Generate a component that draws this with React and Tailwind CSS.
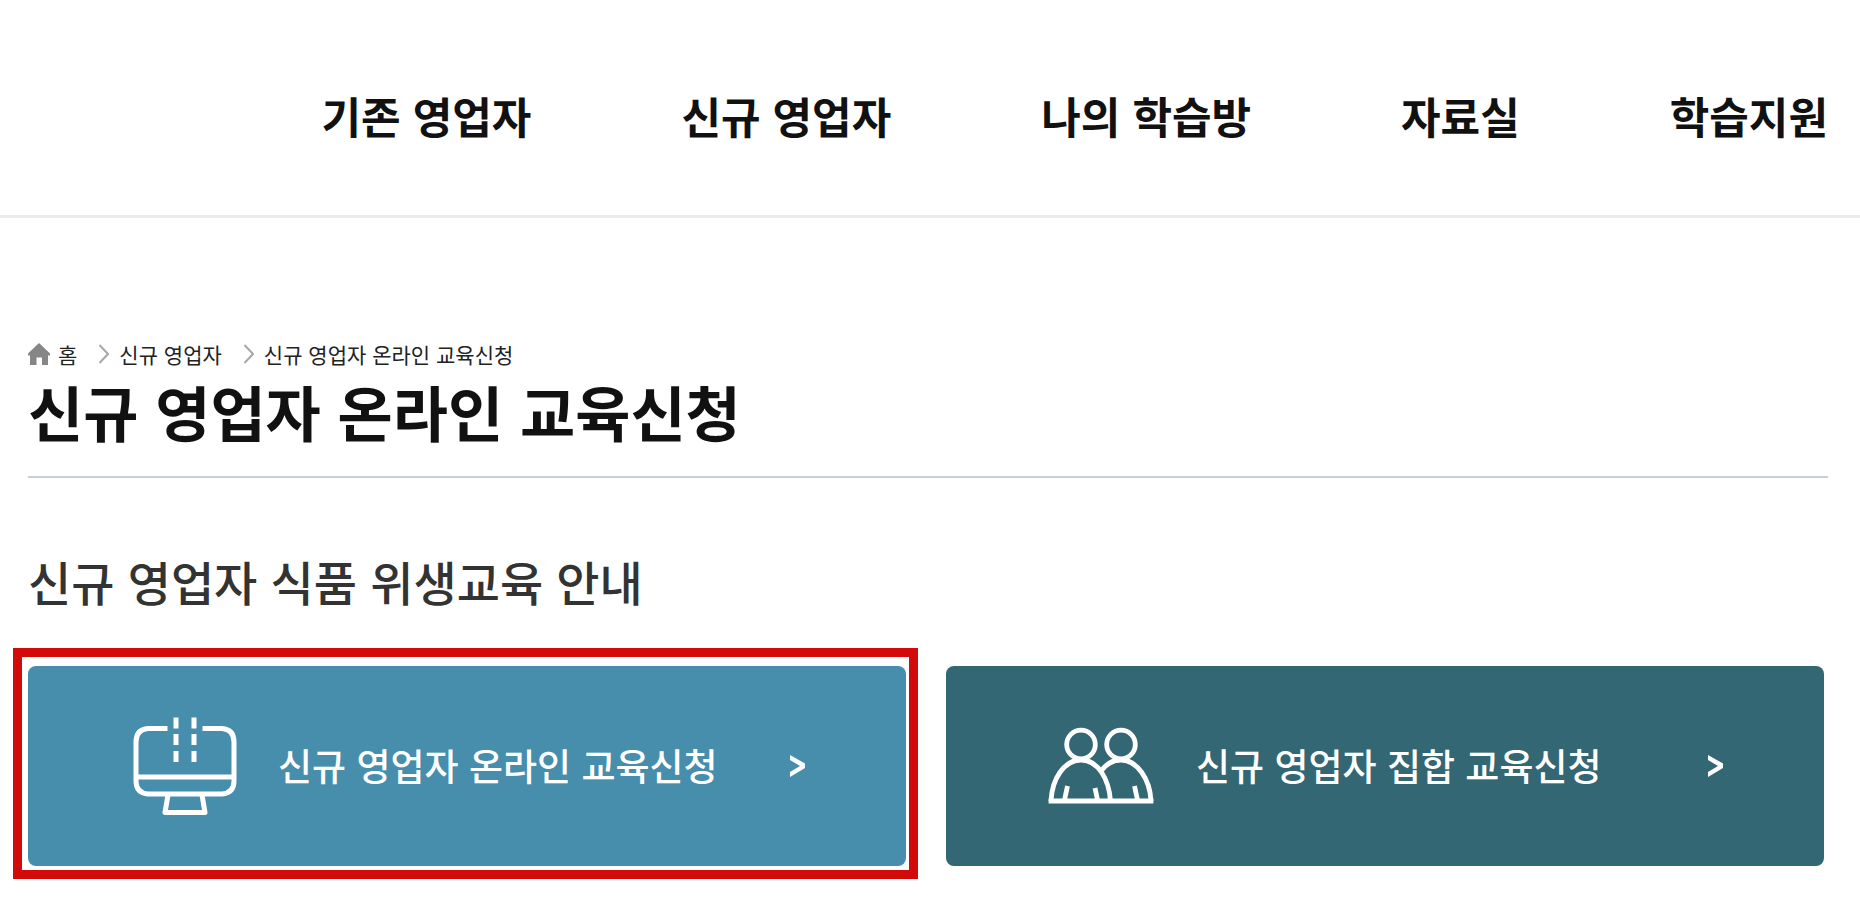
const menus = ["기존 영업자", "신규 영업자", "나의 학습방", "자료실", "학습지원"];

const crumbs = ["신규 영업자", "신규 영업자 온라인 교육신청"];

function HomeIcon() {
  return (
    <svg width="22" height="22" viewBox="0 0 22 22" fill="#868686" aria-hidden="true">
      <path d="M11 0 L22 10.5 V12.5 H20 V22 H14 V14.5 H8.5 V22 H2 V12.5 H0 V10.5 Z" />
    </svg>
  );
}

function CrumbArrow() {
  return (
    <svg width="10" height="20" viewBox="0 0 10 20" fill="none" stroke="#a8a8a8" strokeWidth="2" aria-hidden="true">
      <path d="M0.5 1 L9 10 L0.5 19" />
    </svg>
  );
}

function MonitorIcon() {
  return (
    <svg width="108" height="98" viewBox="-3 0 108 98" fill="none" stroke="#fff" strokeWidth="5" aria-hidden="true">
      <path d="M34.5 11.5 H15 Q3 12.5 3 25 V64 Q3 76 15 77 H89 Q101 76 101 64 V25 Q101 12.5 89 11.5 H69.5" />
      <path d="M3 60 H101" />
      <path d="M35 78 L32 95.5 H72 L69 78" strokeLinejoin="round" />
      <path d="M43 0.5 V11.5 M43 17 V28 M43 34 V45 M61 0.5 V11.5 M61 17 V28 M61 34 V45" />
    </svg>
  );
}

function PeopleIcon() {
  return (
    <svg width="108" height="78" viewBox="0 0 108 78" fill="none" stroke="#fff" strokeWidth="4.8" aria-hidden="true">
      <circle cx="33" cy="17.5" r="14.3" />
      <circle cx="73" cy="17.5" r="14.3" />
      <path d="M3 74 C4 52 16 33 33 33 C50 33 61 52 62.5 74" />
      <path d="M53.5 43.5 C59 36 66 33 73 33 C89 33 102 52 103 74" />
      <path d="M0.6 74 H105.4" />
      <path d="M19.5 59 L16.5 73 M47 61 L49.5 73 M86.5 59 L89.5 73" />
    </svg>
  );
}

function NextIcon() {
  return (
    <svg width="18" height="24" viewBox="0 0 18 24" fill="#fff" aria-hidden="true">
      <path d="M2 1 L17 9.5 V14 L2 23 V18 L12 12 L2 6 Z" />
    </svg>
  );
}

function CourseCard({ icon, label, color, highlighted }) {
  return (
    <a
      href="#"
      className={`relative flex h-50 flex-1 items-center rounded-lg pr-25 pl-[102px] text-white ${color}`}
    >
      {highlighted && (
        <span className="pointer-events-none absolute -top-[18px] -right-3 -bottom-[13px] -left-[15px] border-9 border-[#d20a0a]" />
      )}
      {icon}
      <span className="ml-10 flex-1 text-[37px] font-medium whitespace-nowrap">{label}</span>
      <NextIcon />
    </a>
  );
}

export default function App() {
  return (
    <div
      lang="ko"
      className="min-h-screen bg-white font-['Noto_Sans_CJK_KR',sans-serif] text-[#111]"
    >
      <header className="border-b-3 border-[#ebebeb] pt-20 pr-8 pb-16">
        <nav className="flex justify-end gap-[150px] text-[43px] leading-[71px] font-bold whitespace-nowrap">
          {menus.map((menu) => (
            <a key={menu} href="#">
              {menu}
            </a>
          ))}
        </nav>
      </header>

      <main className="pt-[120px] pr-8 pl-7">
        <nav className="flex items-center text-[21px] leading-8 text-[#222]">
          <a href="#" className="flex items-center gap-2">
            <HomeIcon />
            홈
          </a>
          {crumbs.map((crumb) => (
            <span key={crumb} className="ml-[22px] flex items-center gap-[10px]">
              <CrumbArrow />
              <a href="#">{crumb}</a>
            </span>
          ))}
        </nav>

        <h1 className="border-b-2 border-[#c6cfdb] pb-6 text-[60px] leading-[82px] font-bold">
          신규 영업자 온라인 교육신청
        </h1>

        <h2 className="pt-[68px] text-[47px] leading-[70px] text-[#333] font-medium">
          신규 영업자 식품 위생교육 안내
        </h2>

        <div className="mt-[50px] flex gap-10 pr-1">
          <CourseCard
            icon={<MonitorIcon />}
            label="신규 영업자 온라인 교육신청"
            color="bg-[#468eac]"
            highlighted
          />
          <CourseCard
            icon={<PeopleIcon />}
            label="신규 영업자 집합 교육신청"
            color="bg-[#336774]"
          />
        </div>
      </main>
    </div>
  );
}
